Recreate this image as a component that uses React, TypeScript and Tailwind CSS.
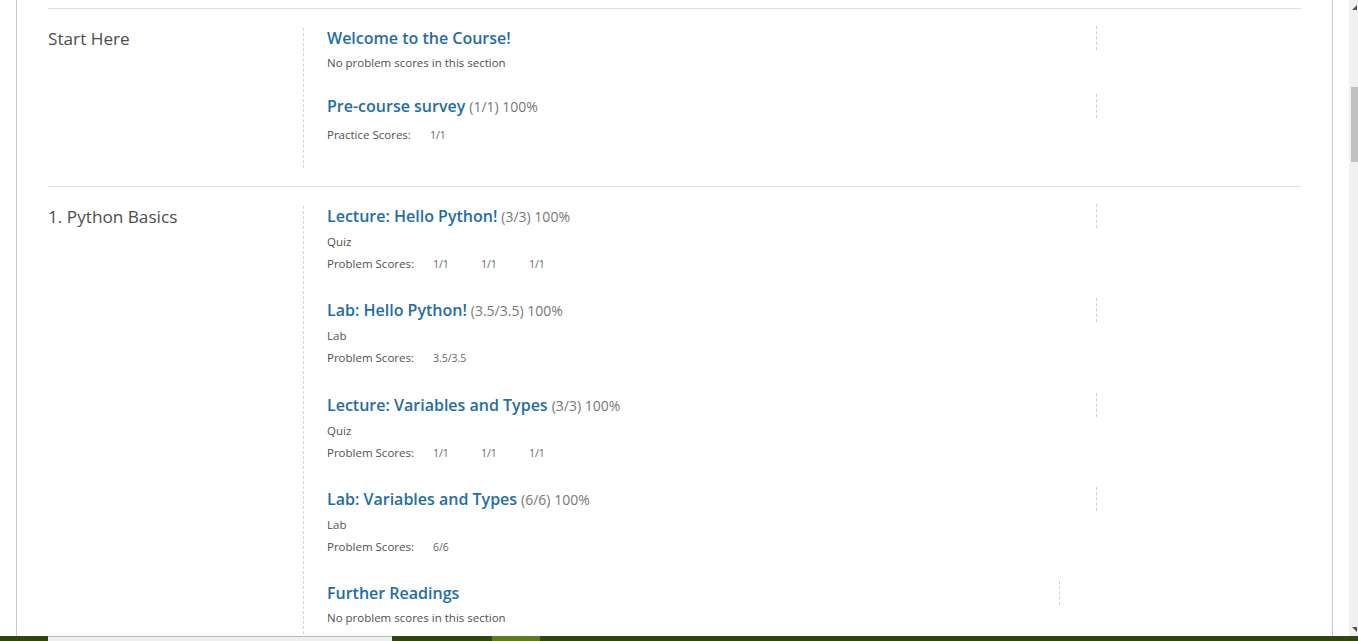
import React from 'react';

type Sub = {
    title: string;
    score?: string;
    type?: string;
    label?: string;
    scores?: string[];
    note?: string;
    gap: string;
};

const startHere: Sub[] = [
    { title: 'Welcome to the Course!', note: 'No problem scores in this section', gap: 'mb-[25px]' },
    { title: 'Pre-course survey', score: '(1/1) 100%', label: 'Practice Scores:', scores: ['1/1'], gap: 'mb-[25px]' },
];

const pythonBasics: Sub[] = [
    { title: 'Lecture: Hello Python!', score: '(3/3) 100%', type: 'Quiz', label: 'Problem Scores:', scores: ['1/1', '1/1', '1/1'], gap: 'mb-[28px]' },
    { title: 'Lab: Hello Python!', score: '(3.5/3.5) 100%', type: 'Lab', label: 'Problem Scores:', scores: ['3.5/3.5'], gap: 'mb-[29px]' },
    { title: 'Lecture: Variables and Types', score: '(3/3) 100%', type: 'Quiz', label: 'Problem Scores:', scores: ['1/1', '1/1', '1/1'], gap: 'mb-[28px]' },
    { title: 'Lab: Variables and Types', score: '(6/6) 100%', type: 'Lab', label: 'Problem Scores:', scores: ['6/6'], gap: 'mb-[28px]' },
    { title: 'Further Readings', note: 'No problem scores in this section', gap: 'mb-[28px]' },
];

function Subsection({ sub }: { sub: Sub }) {
    return (
        <div className={`flex items-start ${sub.gap}`}>
            <div className={sub.title === 'Further Readings' ? 'w-[732px]' : 'w-[769px]'}>
                <h3 className="h-5 leading-5 text-[16px] font-semibold text-[#1f6da6] whitespace-nowrap">
                    {sub.title}
                    {sub.score && <span className="ml-1 text-[14px] font-normal text-[#777]">{sub.score}</span>}
                </h3>
                {sub.note && <p className="mt-[7px] leading-4 text-[11.5px] text-[#505050]">{sub.note}</p>}
                {sub.type && <p className="mt-[8px] leading-4 text-[11.5px] text-[#505050]">{sub.type}</p>}
                {sub.label && (
                    <div className={`${sub.type ? 'mt-[6px]' : 'mt-[11px]'} flex leading-4 text-[11.5px]`}>
                        <span className="text-[#505050]">{sub.label}</span>
                        <div className="ml-[19px] flex">
                            {sub.scores?.map((s, i) => (
                                <span key={i} className="w-12 text-[10.5px] text-[#666]">{s}</span>
                            ))}
                        </div>
                    </div>
                )}
            </div>
            <div className="mt-[-2px] h-6 border-l border-dashed border-[#cfcfcf]" />
        </div>
    );
}

function Section({ name, subs }: { name: string; subs: Sub[] }) {
    return (
        <section className="flex border-t border-[#dedede] pt-[19px] pb-[18px]">
            <h2 className="mt-[-1px] w-[255px] shrink-0 leading-6 text-[17.2px] text-[#4d4d4d]">{name}</h2>
            <div className="flex-1 border-l border-dashed border-[#d4d4d4] pl-[23px]">
                {subs.map((s, i) => (
                    <Subsection key={i} sub={s} />
                ))}
            </div>
        </section>
    );
}

function Scrollbar() {
    return (
        <div className="flex w-[9px] flex-col bg-[#f0f0f0]">
            <div className="flex h-[14px] items-center justify-end pr-[1px]">
                <div className="h-0 w-0 border-b-[5px] border-l-[5px] border-b-[#505050] border-l-transparent" />
            </div>
            <div className="h-[73px]" />
            <div className="ml-[2px] h-[75px] bg-[#c1c1c1]" />
            <div className="flex-1" />
            <div className="flex h-[14px] items-center justify-end pr-[1px]">
                <div className="h-0 w-0 border-t-[5px] border-l-[5px] border-t-[#505050] border-l-transparent" />
            </div>
        </div>
    );
}

export default function App() {
    return (
        <div className="flex h-[641px] w-[1358px] flex-col overflow-hidden bg-white font-['Open_Sans',sans-serif]">
            <div className="flex min-h-0 flex-1">
                <div className="w-4 shrink-0" />
                <main className="w-[1317px] shrink-0 overflow-hidden border-x border-[#c9c9c9] px-[31px]">
                    <div className="h-2" />
                    <Section name="Start Here" subs={startHere} />
                    <Section name="1. Python Basics" subs={pythonBasics} />
                </main>
                <div className="flex-1" />
                <Scrollbar />
            </div>
            <div className="flex h-[5px] shrink-0">
                <div className="w-12 bg-[#2f4610]" />
                <div className="w-[344px] border-t border-[#b9b9b9] bg-[#efefef]" />
                <div className="w-[100px] bg-[#2f4610]" />
                <div className="w-12 bg-[#5c7d1e]" />
                <div className="flex-1 bg-[#2f4610]" />
            </div>
        </div>
    );
}
